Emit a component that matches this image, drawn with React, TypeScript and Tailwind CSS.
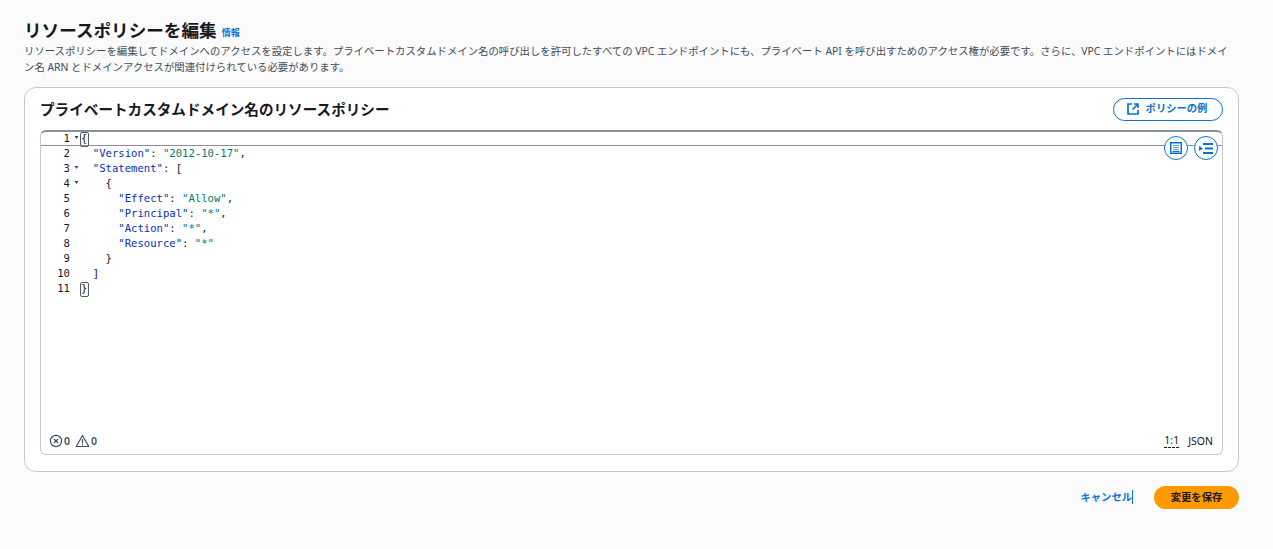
import React from 'react';

const KEY = 'text-[#0431b8]';
const STR = 'text-[#037a6e]';

type Token = { t: string; c?: string };

const lines: { fold?: boolean; indent: number; tokens: Token[]; box?: boolean }[] = [
  { fold: true, indent: 0, tokens: [{ t: '{' }], box: true },
  { indent: 2, tokens: [{ t: '"Version"', c: KEY }, { t: ': ' }, { t: '"2012-10-17"', c: STR }, { t: ',' }] },
  { fold: true, indent: 2, tokens: [{ t: '"Statement"', c: KEY }, { t: ': [' }] },
  { fold: true, indent: 4, tokens: [{ t: '{' }] },
  { indent: 6, tokens: [{ t: '"Effect"', c: KEY }, { t: ': ' }, { t: '"Allow"', c: STR }, { t: ',' }] },
  { indent: 6, tokens: [{ t: '"Principal"', c: KEY }, { t: ': ' }, { t: '"*"', c: STR }, { t: ',' }] },
  { indent: 6, tokens: [{ t: '"Action"', c: KEY }, { t: ': ' }, { t: '"*"', c: STR }, { t: ',' }] },
  { indent: 6, tokens: [{ t: '"Resource"', c: KEY }, { t: ': ' }, { t: '"*"', c: STR }] },
  { indent: 4, tokens: [{ t: '}' }] },
  { indent: 2, tokens: [{ t: ']' }] },
  { indent: 0, tokens: [{ t: '}' }], box: true },
];

const CodeRow = ({ n, line }: { n: number; line: (typeof lines)[number] }) => (
  <div className="flex h-[15px] items-center leading-[15px] whitespace-pre">
    <span className="w-[29px] text-right text-[#16191f]">{n}</span>
    <span className="flex w-[10px] justify-end pr-[1px]">
      {line.fold && (
        <svg width="5" height="5" viewBox="0 0 5 5" className="-mt-[2px]">
          <path d="M0.5 1h4L2.5 4z" fill="#414d5c" />
        </svg>
      )}
    </span>
    <span className="text-[#16191f]">
      {' '.repeat(line.indent)}
      {line.box ? (
        <span className="relative pl-[1px]">
          {line.tokens[0].t}
          <span className="absolute left-0 top-[0px] h-[15px] w-[9px] rounded-[2px] border border-[#545b64]" />
        </span>
      ) : (
        line.tokens.map((tok, i) => (
          <span key={i} className={tok.c}>
            {tok.t}
          </span>
        ))
      )}
    </span>
  </div>
);

const RoundIcon = ({ children }: { children: React.ReactNode }) => (
  <div className="flex h-[24px] w-[24px] items-center justify-center rounded-full border border-[#0972d3] bg-white">
    {children}
  </div>
);

export default function App() {
  return (
    <div className="min-h-[549px] bg-[#fbfbfb] px-[24px] pt-[19px] font-['Noto_Sans','Noto_Sans_CJK_JP',sans-serif] text-[#16191f]">
      <div className="flex items-center gap-[5px] h-[22px]">
        <h1 className="text-[17.6px] font-bold leading-[22px] text-[#16191f]">リソースポリシーを編集</h1>
        <a className="mt-[5px] text-[9px] font-bold leading-[12px] text-[#0972d3]">情報</a>
      </div>
      <p className="mt-[2px] w-[1208px] text-[10.38px] leading-[16px] text-[#414d5c]">
        リソースポリシーを編集してドメインへのアクセスを設定します。プライベートカスタムドメイン名の呼び出しを許可したすべての VPC エンドポイントにも、プライベート API を呼び出すためのアクセス権が必要です。さらに、VPC エンドポイントにはドメイン名 ARN とドメインアクセスが関連付けられている必要があります。
      </p>

      <div className="mt-[12px] h-[385px] w-[1215px] rounded-[12px] border border-[#c6c6cd] bg-white px-[15px] pt-[9px]">
        <div className="flex h-[24px] items-center justify-between">
          <h2 className="text-[14.6px] font-bold leading-[20px] text-[#16191f]">プライベートカスタムドメイン名のリソースポリシー</h2>
          <button className="flex h-[23px] w-[110px] items-center justify-center gap-[7px] rounded-full border border-[#0972d3] pr-[2px] text-[10.3px] font-bold text-[#0972d3]">
            <svg width="12" height="12" viewBox="0 0 12 12" fill="none" stroke="#0972d3" strokeWidth="1.7">
              <path d="M5 1H1v10h10V7" />
              <path d="M7 1h4v4M11 1L5.5 6.5" />
            </svg>
            ポリシーの例
          </button>
        </div>

        <div className="relative mt-[9px] flex h-[325px] w-[1183px] flex-col rounded-[6px] border border-t-2 border-[#c6c6cd] border-t-[#8d9099]">
          <div className="pointer-events-none absolute inset-x-0 -top-px h-[15px] border-b border-[#8d8d9b]" />
          <div className="relative -mt-px flex-1 font-['DejaVu_Sans_Mono',monospace] text-[10.6px]">
            {lines.map((l, i) => (
              <CodeRow key={i} n={i + 1} line={l} />
            ))}
          </div>
          <div className="absolute right-[4px] top-[4px] flex gap-[6px]">
            <RoundIcon>
              <svg width="12" height="12" viewBox="0 0 12 12" fill="none" stroke="#0972d3">
                <rect x="0.75" y="0.75" width="10.5" height="10.5" strokeWidth="1.5" />
                <path d="M3 3.5h6M3 5.5h6M3 7.5h6" strokeWidth="1" opacity="0.6" />
                <path d="M2.5 9.5h7" strokeWidth="1.2" />
              </svg>
            </RoundIcon>
            <RoundIcon>
              <svg width="14" height="11" viewBox="0 0 14 11" fill="#0972d3">
                <path d="M0 3l4 2.5L0 8zM4 0h10v2H4zM6 4.5h8v2H6zM4 9h10v2H4z" />
              </svg>
            </RoundIcon>
          </div>
          <div className="flex h-[26px] items-start justify-between pl-[8px] pr-[9px] pt-[6px] text-[10.5px] leading-[14px]">
            <div className="flex items-center font-semibold text-[#414d5c]">
              <svg width="14" height="14" viewBox="0 0 14 14" fill="none" stroke="#414d5c" strokeWidth="1.2">
                <circle cx="7" cy="7" r="5.6" />
                <path d="M5 5l4 4M9 5l-4 4" />
              </svg>
              <span className="ml-[1px]">0</span>
              <svg className="ml-[5px]" width="15" height="14" viewBox="0 0 15 14" fill="none" stroke="#414d5c" strokeWidth="1.2">
                <path d="M7.5 1.5L13.8 12.5H1.2z" strokeLinejoin="round" />
                <path d="M7.5 5v4.2M7.5 10v1.2" />
              </svg>
              <span className="ml-[1px]">0</span>
            </div>
            <div className="flex items-center gap-[9px] text-[#16191f]">
              <span className="border-b border-dashed border-[#16191f] leading-[13px]">1:1</span>
              <span>JSON</span>
            </div>
          </div>
        </div>
      </div>

      <div className="mt-[14px] flex w-[1215px] items-center justify-end gap-[21px]">
        <a className="-mt-px border-r border-[#0972d3] text-[10.3px] font-bold leading-[14px] text-[#0972d3]">キャンセル</a>
        <button className="h-[23px] w-[85px] rounded-full bg-[#ff9900] text-[10.3px] font-bold text-[#16191f]">変更を保存</button>
      </div>
    </div>
  );
}
